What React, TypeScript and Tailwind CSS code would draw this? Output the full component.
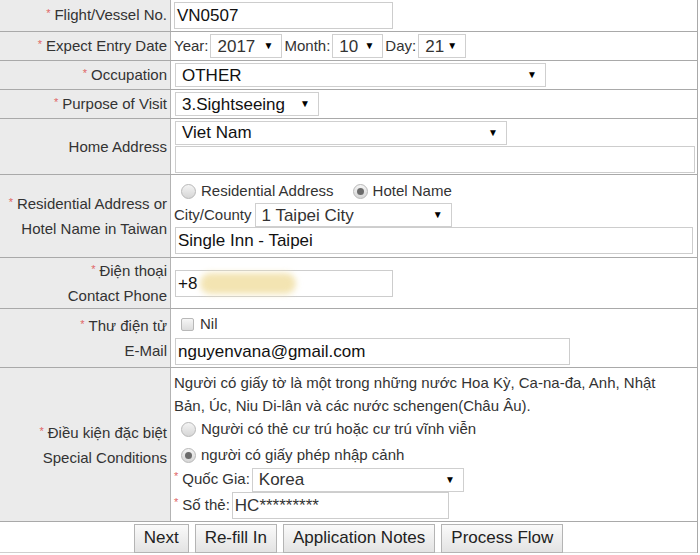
import React from "react";

type RowProps = {
    h: string;
    label: React.ReactNode;
    children: React.ReactNode;
};

const Star = () => <span className="text-[#e06666] text-[11px] relative -top-[3px] mr-[4px]">*</span>;

const Row = ({ h, label, children }: RowProps) => (
    <div className={`flex border-b border-[#a9a9a9] ${h}`}>
        <div className="w-[171px] shrink-0 bg-[#ebebeb] border-r border-[#b3b3b3] flex items-center justify-end pr-[3px] text-right text-[15px] leading-[23px] text-[#333]">
            <div>{label}</div>
        </div>
        <div className="flex-1 pl-[3px] flex flex-col justify-center text-[#111]">{children}</div>
    </div>
);

const Select = ({ value, w }: { value: string; w: string }) => (
    <div className={`${w} h-[24px] border border-[#cfcfcf] bg-white flex items-center justify-between pl-[6px] pr-[8px] text-[17px] leading-none`}>
        <span>{value}</span>
        <span className="text-[10px] text-black">▼</span>
    </div>
);

const Input = ({ value, w, className = "" }: { value?: string; w: string; className?: string }) => (
    <div className={`${w} h-[27px] border border-[#cdcdcd] bg-white flex items-center pl-[2px] text-[17px] leading-none ${className}`}>
        {value}
    </div>
);

const Radio = ({ checked }: { checked?: boolean }) => (
    <span className="w-[15px] h-[15px] rounded-full border border-[#b8b8b8] bg-gradient-to-b from-[#f4f4f4] to-[#d6d6d6] flex items-center justify-center shrink-0">
        {checked && <span className="w-[7px] h-[7px] rounded-full bg-[#6b6b6b]" />}
    </span>
);

const Btn = ({ children }: { children: React.ReactNode }) => (
    <div className="h-[29px] px-[9px] border border-[#b4b4b4] bg-gradient-to-b from-[#fafafa] to-[#e3e3e3] flex items-center text-[17px] text-[#222]">
        {children}
    </div>
);

export default function App() {
    return (
        <div className="w-[700px] h-[555px] bg-white font-['Liberation_Sans',Arial,sans-serif] overflow-hidden">
            <div className="w-[698px] border-r border-[#a9a9a9]">
                <Row h="h-[32px]" label={<><Star />Flight/Vessel No.</>}>
                    <Input value="VN0507" w="w-[219px]" />
                </Row>
                <Row h="h-[29px]" label={<><Star />Expect Entry Date</>}>
                    <div className="flex items-center text-[15px] text-[#333]">
                        <span>Year:</span>
                        <div className="ml-[2px] mr-[2px]"><Select value="2017" w="w-[72px]" /></div>
                        <span>Month:</span>
                        <div className="ml-[2px] mr-[2px]"><Select value="10" w="w-[51px]" /></div>
                        <span>Day:</span>
                        <div className="ml-[2px]"><Select value="21" w="w-[48px]" /></div>
                    </div>
                </Row>
                <Row h="h-[29px]" label={<><Star />Occupation</>}>
                    <div className="pl-[1px]"><Select value="OTHER" w="w-[371px]" /></div>
                </Row>
                <Row h="h-[29px]" label={<><Star />Purpose of Visit</>}>
                    <div className="pl-[1px]"><Select value="3.Sightseeing" w="w-[144px]" /></div>
                </Row>
                <Row h="h-[56px]" label="Home Address">
                    <div className="pl-[1px] flex flex-col gap-[1px]">
                        <Select value="Viet Nam" w="w-[332px]" />
                        <Input w="w-[520px]" />
                    </div>
                </Row>
                <Row h="h-[83px]" label={<><Star />Residential Address or<br />Hotel Name in Taiwan</>}>
                    <div className="flex flex-col text-[15px] text-[#333]">
                        <div className="flex items-center h-[25px] pl-[7px] pt-[2px]">
                            <Radio />
                            <span className="ml-[5px]">Residential Address</span>
                            <span className="ml-[19px]"><Radio checked /></span>
                            <span className="ml-[5px]">Hotel Name</span>
                        </div>
                        <div className="flex items-center">
                            <span>City/County</span>
                            <div className="ml-[3px]"><Select value="1 Taipei City" w="w-[197px]" /></div>
                        </div>
                        <div className="pl-[1px]"><Input value="Single Inn - Taipei" w="w-[518px]" className="text-[#111]" /></div>
                    </div>
                </Row>
                <Row h="h-[51px]" label={<><Star />Điện thoại<br />Contact Phone</>}>
                    <div className="relative pl-[1px]">
                        <Input value="+8" w="w-[218px]" />
                        <div className="absolute left-[26px] top-[3px] w-[96px] h-[21px] rounded-full bg-[#f3e4b2] blur-[3px]" />
                    </div>
                </Row>
                <Row h="h-[59px]" label={<><Star />Thư điện tử<br />E-Mail</>}>
                    <div className="flex flex-col">
                        <div className="flex items-center h-[26px] pl-[7px] text-[15px] text-[#333]">
                            <span className="w-[13px] h-[13px] rounded-[2px] border border-[#b8b8b8] bg-gradient-to-b from-[#f6f6f6] to-[#dcdcdc]" />
                            <span className="ml-[6px]">Nil</span>
                        </div>
                        <div className="pl-[1px]"><Input value="nguyenvana@gmail.com" w="w-[395px]" /></div>
                    </div>
                </Row>
                <Row h="h-[154px]" label={<><Star />Điều kiện đặc biệt<br />Special Conditions</>}>
                    <div className="flex flex-col text-[15px] text-[#333]">
                        <div className="leading-[23px]">
                            Người có giấy tờ là một trong những nước Hoa Kỳ, Ca-na-đa, Anh, Nhật
                            <br />
                            Bản, Úc, Niu Di-lân và các nước schengen(Châu Âu).
                        </div>
                        <div className="flex items-center h-[26px] pl-[7px]">
                            <Radio />
                            <span className="ml-[5px]">Người có thẻ cư trú hoặc cư trú vĩnh viễn</span>
                        </div>
                        <div className="flex items-center h-[25px] pl-[7px]">
                            <Radio checked />
                            <span className="ml-[5px]">người có giấy phép nhập cảnh</span>
                        </div>
                        <div className="flex items-center">
                            <Star />
                            <span>Quốc Gia:</span>
                            <div className="ml-[2px]"><Select value="Korea" w="w-[212px]" /></div>
                        </div>
                        <div className="flex items-center">
                            <Star />
                            <span>Số thẻ:</span>
                            <div className="ml-[2px]"><Input value="HC*********" w="w-[217px]" /></div>
                        </div>
                    </div>
                </Row>
                <div className="h-[31px] flex items-center justify-center gap-[6px] border-b border-[#cfcfcf] pt-[2px]">
                    <Btn>Next</Btn>
                    <Btn>Re-fill In</Btn>
                    <Btn>Application Notes</Btn>
                    <Btn>Process Flow</Btn>
                </div>
            </div>
        </div>
    );
}
